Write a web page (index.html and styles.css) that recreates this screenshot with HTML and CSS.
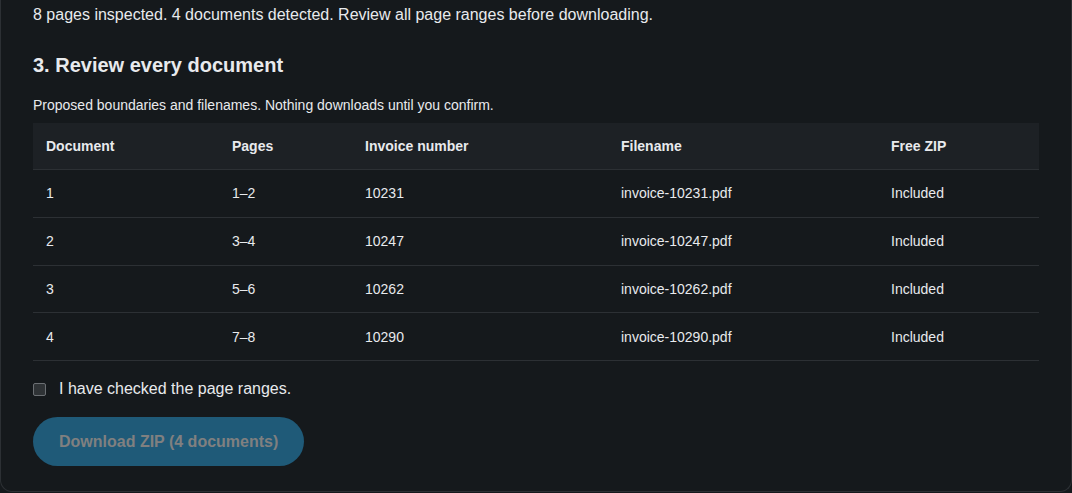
FILE: index.html
```html
<!DOCTYPE html>
<html lang="en">
<head>
<meta charset="utf-8">
<title>Review documents</title>
<link rel="stylesheet" href="styles.css">
</head>
<body>
<section class="card">
  <p class="status">8 pages inspected. 4 documents detected. Review all page ranges before downloading.</p>
  <h2 class="step-title">3. Review every document</h2>
  <p class="hint">Proposed boundaries and filenames. Nothing downloads until you confirm.</p>
  <table class="docs">
    <thead>
      <tr><th class="c1">Document</th><th class="c2">Pages</th><th class="c3">Invoice number</th><th class="c4">Filename</th><th class="c5">Free ZIP</th></tr>
    </thead>
    <tbody>
      <tr><td>1</td><td>1–2</td><td>10231</td><td>invoice-10231.pdf</td><td>Included</td></tr>
      <tr><td>2</td><td>3–4</td><td>10247</td><td>invoice-10247.pdf</td><td>Included</td></tr>
      <tr><td>3</td><td>5–6</td><td>10262</td><td>invoice-10262.pdf</td><td>Included</td></tr>
      <tr><td>4</td><td>7–8</td><td>10290</td><td>invoice-10290.pdf</td><td>Included</td></tr>
    </tbody>
  </table>
  <label class="confirm"><input type="checkbox" class="box"><span>I have checked the page ranges.</span></label>
  <button class="download" disabled>Download ZIP (4 documents)</button>
</section>
</body>
</html>
```
FILE: styles.css
```css
html, body {
  margin: 0;
  padding: 0;
  background: #15191c;
}
body {
  font-family: "Liberation Sans", Arial, sans-serif;
  color: #e8eaed;
}
.card {
  background: #15191c;
  border: 1px solid #2c3034;
  border-top: none;
  border-radius: 0 0 12px 12px;
  padding: 0 32px 26px;
  height: 492px;
  box-sizing: border-box;
}
.status {
  margin: 0;
  padding-top: 5px;
  font-size: 16px;
  line-height: 20px;
}
.step-title {
  margin: 28px 0 0;
  font-size: 20px;
  line-height: 24px;
  font-weight: 700;
}
.hint {
  margin: 20px 0 0;
  font-size: 14px;
  line-height: 17px;
}
.docs {
  margin-top: 9px;
  width: 100%;
  table-layout: fixed;
  border-collapse: collapse;
  font-size: 14px;
}
.docs th, .docs td {
  text-align: left;
  line-height: 20px;
  border-bottom: 1px solid #2c3034;
  box-sizing: border-box;
}
.docs th {
  background: #1d2125;
  font-weight: 700;
  padding: 13px 13px;
}
.docs .c1 { width: 186px; }
.docs .c2 { width: 133px; }
.docs .c3 { width: 256px; }
.docs .c4 { width: 270px; }
.docs td {
  padding: 13.4px 13px;
}
.confirm {
  display: flex;
  align-items: center;
  gap: 13px;
  margin-top: 19px;
  font-size: 16px;
  line-height: 18px;
}
.box {
  appearance: none;
  -webkit-appearance: none;
  margin: 0;
  width: 13px;
  height: 13px;
  border: 1px solid #6b6f73;
  border-radius: 2px;
  background: #2f3336;
}
.download {
  margin-top: 19px;
  height: 49px;
  padding: 0 26px;
  border: none;
  border-radius: 999px;
  background: #1f5a78;
  color: #808080;
  font-family: "Liberation Sans", Arial, sans-serif;
  font-size: 16px;
  font-weight: 700;
}
```
